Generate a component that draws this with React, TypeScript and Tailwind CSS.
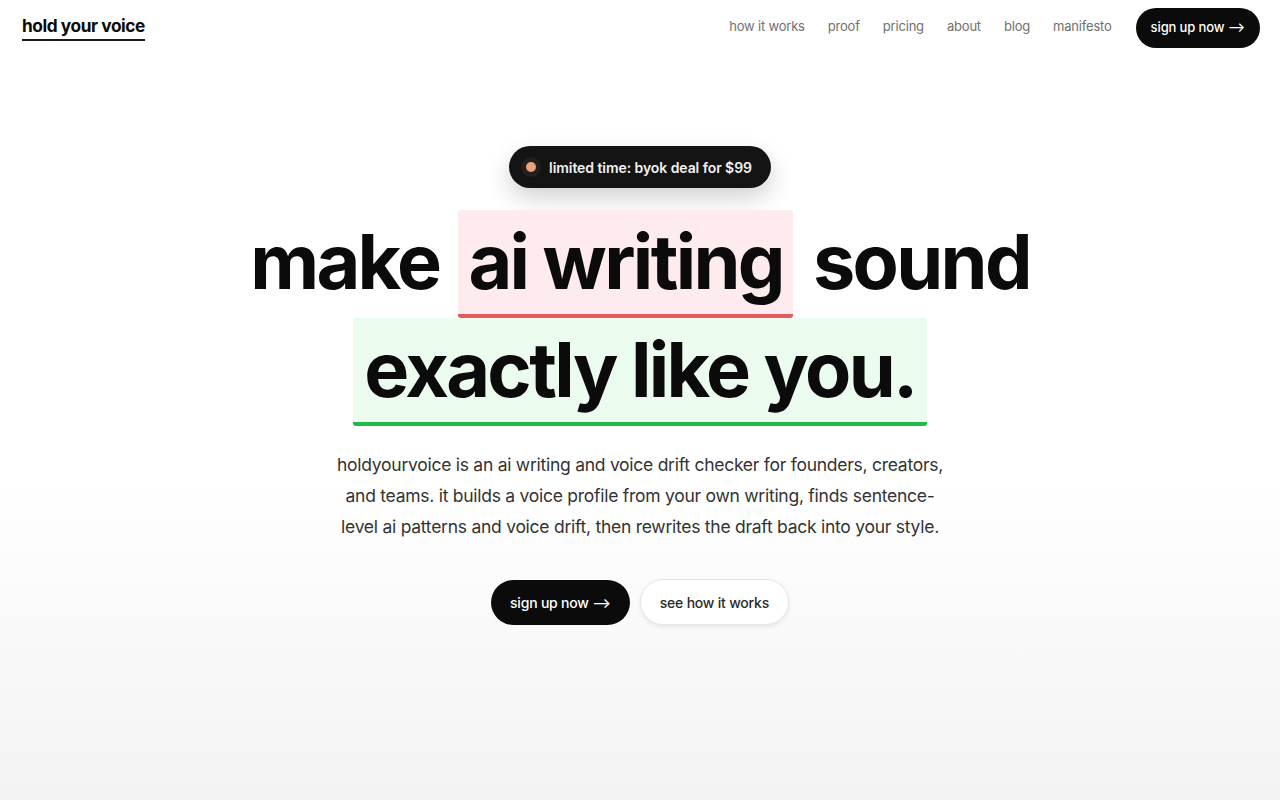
import React from "react";

const navLinks = ["how it works", "proof", "pricing", "about", "blog", "manifesto"];

export default function App() {
  return (
    <div
      className="min-h-[800px] bg-gradient-to-b from-white from-60% to-[#f3f3f3] text-[#0b0b0b]"
      style={{ fontFamily: "Inter, 'Noto Sans', Arial, sans-serif" }}
    >
      {/* Header */}
      <header className="flex items-center justify-between h-[54px] pl-[22px] pr-5">
        <a href="#" className="text-[17.3px] font-bold tracking-[-0.025em] leading-none border-b-2 border-[#1a1a1a] pb-[5px] mt-[4px]">
          hold your voice
        </a>
        <nav className="flex items-center">
          <div className="flex items-center gap-[23px] mr-6">
            {navLinks.map((l) => (
              <a key={l} href="#" className="text-[13px] text-[#707070] tracking-[-0.015em]">
                {l}
              </a>
            ))}
          </div>
          <a
            href="#"
            className="h-10 px-[15px] mt-[2px] flex items-center rounded-full bg-[#0b0b0b] text-white text-[13px] font-medium tracking-[-0.01em]"
          >
            sign up now ⟶
          </a>
        </nav>
      </header>

      {/* Hero */}
      <main className="flex flex-col items-center pt-[92px]">
        <div className="h-[42px] pl-[12px] pr-[19px] flex items-center gap-[8px] rounded-full bg-[#151414] shadow-[0_10px_24px_rgba(0,0,0,0.18)]">
          <span className="w-[20px] h-[20px] rounded-full bg-[#221f1e] flex items-center justify-center">
            <span className="w-[10px] h-[10px] rounded-full bg-[#e9a27c]" />
          </span>
          <span className="text-[14px] font-semibold text-[#f1f1f1] tracking-[-0.005em]">
            limited time: byok deal for $99
          </span>
        </div>

        <h1 className="mt-[22px] flex flex-col items-center text-[75.5px] font-bold tracking-[-0.035em] leading-[104px]">
          <span className="flex items-end">
            <span className="pb-[4px]">make</span>
            <span className="ml-[19px] px-[10px] bg-[#fdebed] border-b-4 border-[#e25c5c] rounded-[3px]">
              ai writing
            </span>
            <span className="ml-[20px] pb-[4px]">sound</span>
          </span>
          <span className="px-[11px] bg-[#ebfbee] border-b-4 border-[#22b84a] rounded-[3px]">
            exactly like you.
          </span>
        </h1>

        <p className="mt-[23px] w-[620px] text-center text-[17.5px] leading-[31px] text-[#333] tracking-[-0.015em]">
          holdyourvoice is an ai writing and voice drift checker for founders, creators, and teams. it builds a voice
          profile from your own writing, finds sentence-level ai patterns and voice drift, then rewrites the draft back
          into your style.
        </p>

        <div className="mt-[37px] flex items-center gap-[10px]">
          <a href="#" className="h-[45px] px-[19px] flex items-center rounded-full bg-[#0b0b0b] text-white text-[14px] font-medium tracking-[-0.015em]">
            sign up now ⟶
          </a>
          <a
            href="#"
            className="h-[46px] px-[19px] flex items-center rounded-full bg-white border border-[#e6e6e6] shadow-[0_2px_4px_rgba(0,0,0,0.08)] text-[#2a2a2a] text-[14px] font-medium tracking-[-0.015em]"
          >
            see how it works
          </a>
        </div>
      </main>
    </div>
  );
}
